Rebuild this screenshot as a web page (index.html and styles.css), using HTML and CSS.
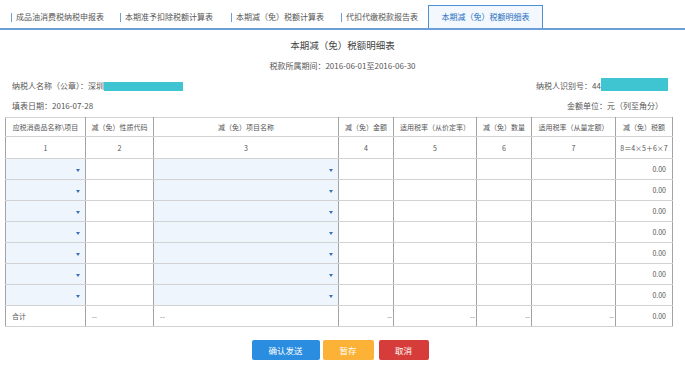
FILE: index.html
```html
<!DOCTYPE html>
<html lang="zh-CN">
<head>
<meta charset="utf-8">
<title>本期减（免）税额明细表</title>
<link rel="stylesheet" href="styles.css">
</head>
<body>
<div class="tabs">
  <div class="tab tab-1"><span class="sep"></span><span class="tab-text">成品油消费税纳税申报表</span></div>
  <div class="tab tab-2"><span class="sep"></span><span class="tab-text">本期准予扣除税额计算表</span></div>
  <div class="tab tab-3"><span class="sep"></span><span class="tab-text">本期减（免）税额计算表</span></div>
  <div class="tab tab-4"><span class="sep"></span><span class="tab-text">代扣代缴税款报告表</span></div>
  <div class="tab-active">本期减（免）税额明细表</div>
</div>

<h1 class="title">本期减（免）税额明细表</h1>
<div class="period">税款所属期间：2016-06-01至2016-06-30</div>

<div class="info info-first">
  <div class="info-left">纳税人名称（公章）：深圳<span class="mask mask-left"></span></div>
  <div class="info-right">纳税人识别号：44<span class="mask mask-right"></span></div>
</div>
<div class="info info-second">
  <div class="info-left">填表日期：2016-07-28</div>
  <div class="info-right">金额单位：元（列至角分）</div>
</div>

<table class="grid">
  <colgroup>
    <col class="c1"><col class="c2"><col class="c3"><col class="c4">
    <col class="c5"><col class="c6"><col class="c7"><col class="c8">
  </colgroup>
  <tr class="head">
    <td>应税消费品名称\项目</td>
    <td>减（免）性质代码</td>
    <td>减（免）项目名称</td>
    <td>减（免）金额</td>
    <td>适用税率（从价定率）</td>
    <td>减（免）数量</td>
    <td>适用税率（从量定额）</td>
    <td>减（免）税额</td>
  </tr>
  <tr class="nums">
    <td>1</td><td>2</td><td>3</td><td>4</td><td>5</td><td>6</td><td>7</td><td>8＝4×5＋6×7</td>
  </tr>
  <tr class="data"><td class="sel"><span class="arrow"></span></td><td></td><td class="sel"><span class="arrow"></span></td><td></td><td></td><td></td><td></td><td class="num">0.00</td></tr>
  <tr class="data"><td class="sel"><span class="arrow"></span></td><td></td><td class="sel"><span class="arrow"></span></td><td></td><td></td><td></td><td></td><td class="num">0.00</td></tr>
  <tr class="data"><td class="sel"><span class="arrow"></span></td><td></td><td class="sel"><span class="arrow"></span></td><td></td><td></td><td></td><td></td><td class="num">0.00</td></tr>
  <tr class="data"><td class="sel"><span class="arrow"></span></td><td></td><td class="sel"><span class="arrow"></span></td><td></td><td></td><td></td><td></td><td class="num">0.00</td></tr>
  <tr class="data"><td class="sel"><span class="arrow"></span></td><td></td><td class="sel"><span class="arrow"></span></td><td></td><td></td><td></td><td></td><td class="num">0.00</td></tr>
  <tr class="data"><td class="sel"><span class="arrow"></span></td><td></td><td class="sel"><span class="arrow"></span></td><td></td><td></td><td></td><td></td><td class="num">0.00</td></tr>
  <tr class="data"><td class="sel"><span class="arrow"></span></td><td></td><td class="sel"><span class="arrow"></span></td><td></td><td></td><td></td><td></td><td class="num">0.00</td></tr>
  <tr class="total">
    <td class="left">合计</td>
    <td class="left dash">--</td>
    <td class="left dash">--</td>
    <td class="num dash">--</td>
    <td class="num dash">--</td>
    <td class="num dash">--</td>
    <td class="num dash">--</td>
    <td class="num">0.00</td>
  </tr>
</table>

<div class="actions">
  <button class="btn btn-send">确认发送</button>
  <button class="btn btn-save">暂存</button>
  <button class="btn btn-cancel">取消</button>
</div>
</body>
</html>
```

FILE: styles.css
```css
html, body {
  margin: 0;
  padding: 0;
  background: #ffffff;
}

body {
  font-family: "Noto Sans CJK SC", "Noto Sans", sans-serif;
  color: #555555;
  font-size: 8px;
  line-height: 1.2;
}

/* ---------- tabs ---------- */
.tabs {
  display: flex;
  align-items: flex-end;
  padding: 5px 0 0 11px;
  border-bottom: 2px solid #6c9fd8;
  height: 23px;
}

.tab {
  display: flex;
  align-items: center;
  height: 22px;
  color: #555555;
  flex: none;
}

.tab-1 { width: 109px; }
.tab-2 { width: 111px; }
.tab-3 { width: 110px; }
.tab-4 { width: 87px; }

.sep {
  display: block;
  width: 1px;
  height: 9px;
  background: #6c9fd8;
  margin-right: 4px;
}

.tab-text {
  white-space: nowrap;
}

.tab-active {
  flex: none;
  width: 113px;
  height: 22px;
  border: 1px solid #4d90d8;
  border-bottom: none;
  background: #f3f8fe;
  color: #1f6fc0;
  display: flex;
  align-items: center;
  justify-content: center;
  white-space: nowrap;
  font-size: 8px;
}

/* ---------- headings ---------- */
.title {
  margin: 9px 0 0;
  text-align: center;
  font-size: 9.5px;
  font-weight: normal;
  color: #444444;
  line-height: 12px;
}

.period {
  margin-top: 9px;
  text-align: center;
  line-height: 12px;
  color: #555555;
}

.info {
  display: flex;
  justify-content: space-between;
  align-items: center;
  line-height: 12px;
}

.info-first {
  margin-top: 8px;
  padding: 0 17px 0 12px;
}

.info-second {
  margin-top: 8px;
  padding: 0 22px 0 12px;
}

.info-left, .info-right {
  display: flex;
  align-items: center;
  white-space: nowrap;
}

.mask {
  display: inline-block;
  background: #3ec5d1;
}

.mask-left {
  width: 79px;
  height: 9px;
}

.mask-right {
  width: 67px;
  height: 13px;
  margin-top: -3px;
}

/* ---------- table ---------- */
.grid {
  margin: 5px 0 0 5px;
  border-collapse: collapse;
  table-layout: fixed;
  width: 667px;
  font-size: 7px;
  color: #555555;
}

.c1 { width: 80px; }
.c2 { width: 68px; }
.c3 { width: 185px; }
.c4 { width: 55px; }
.c5 { width: 83px; }
.c6 { width: 55px; }
.c7 { width: 84px; }
.c8 { width: 57px; }

.grid td {
  border-left: 1px solid #a3a3a3;
  border-right: 1px solid #a3a3a3;
  border-top: 1px solid #d2d2d2;
  border-bottom: 1px solid #d2d2d2;
  padding: 0 4px;
  text-align: center;
  white-space: nowrap;
  overflow: hidden;
  line-height: 10px;
}

.grid tr.head td {
  height: 18px;
}

.grid tr.nums td {
  height: 21px;
}

.grid tr.data td {
  height: 20px;
}

.grid tr.total td {
  height: 20px;
}

.grid td.sel {
  background: #eef5fd;
  text-align: right;
  padding-right: 5px;
}

.arrow {
  display: inline-block;
  width: 0;
  height: 0;
  border-left: 2px solid transparent;
  border-right: 2px solid transparent;
  border-top: 3px solid #3d6fb8;
  vertical-align: middle;
}

.grid td.num {
  text-align: right;
  padding-right: 6px;
}

.grid td.left {
  text-align: left;
  padding-left: 6px;
}

.grid td.dash {
  color: #777777;
}

.grid td.num.dash {
  padding-right: 1px;
}

/* ---------- buttons ---------- */
.actions {
  display: flex;
  justify-content: center;
  padding-right: 5px;
  margin-top: 13px;
}

.btn {
  height: 20px;
  border: none;
  border-radius: 2px;
  color: #ffffff;
  font-family: "Noto Sans CJK SC", "Noto Sans", sans-serif;
  font-size: 8.5px;
  padding: 0;
  line-height: 20px;
}

.btn-send {
  width: 68px;
  background: #2a8de0;
}

.btn-save {
  width: 51px;
  margin-left: 3px;
  background: #fbb236;
}

.btn-cancel {
  width: 50px;
  margin-left: 5px;
  background: #d63d3a;
}
```
